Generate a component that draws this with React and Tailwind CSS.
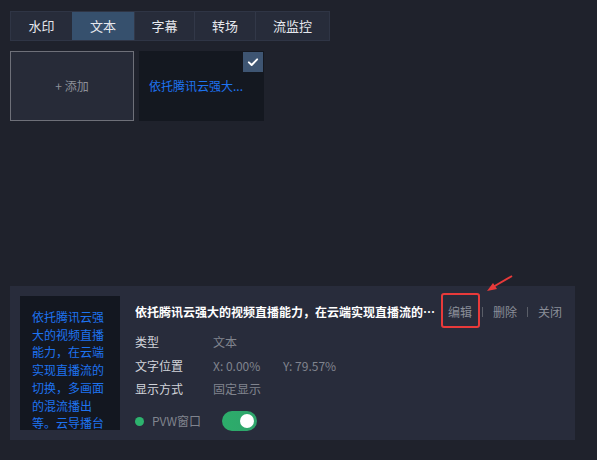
import React from 'react';

const tabs = ['水印', '文本', '字幕', '转场', '流监控'];
const tabWidths = ['w-[61px]', 'w-[62px]', 'w-[60px]', 'w-[61px]', 'w-[74px]'];

const text =
    '依托腾讯云强大的视频直播能力，在云端实现直播流的切换，多画面的混流播出等。云导播台';

export default function App() {
    return (
        <main
            className="relative h-[460px] w-[597px] overflow-hidden bg-[#1f222c] text-[12px]"
            style={{ fontFamily: '"Microsoft YaHei", "Noto Sans CJK SC", "Noto Sans", sans-serif' }}
        >
            {/* ─── Tabs ─── */}
            <div className="ml-[10px] mt-[11px] flex h-[30px] w-fit border border-[#2f3545] bg-[#272c3a]">
                {tabs.map((t, i) => (
                    <div
                        key={t}
                        className={`${tabWidths[i]} flex items-center justify-center text-[13px] text-[#e6e8ee] ${
                            i === 1 ? 'bg-[#36506d]' : ''
                        } ${i > 1 ? 'border-l border-[#323848]' : ''}`}
                    >
                        {t}
                    </div>
                ))}
            </div>

            {/* ─── Cards ─── */}
            <div className="ml-[10px] mt-[10px] flex gap-[5px]">
                <div className="flex h-[70px] w-[124px] items-center justify-center border border-[#6e7079] bg-[#272b38] text-[12px] text-[#8d9099]">
                    + 添加
                </div>
                <div className="relative flex h-[70px] w-[125px] items-center bg-[#141820] pl-[10px] text-[12px] text-[#1e73f0]">
                    依托腾讯云强大...
                    <div className="absolute right-[1px] top-[1px] flex h-[20px] w-[20px] items-center justify-center bg-[#3e5572]">
                        <svg viewBox="0 0 16 16" className="h-[12px] w-[12px]">
                            <path d="M2.5 8.5 L6.2 12 L13.5 4.5" fill="none" stroke="#fff" strokeWidth="2.6" strokeLinecap="round" strokeLinejoin="round" />
                        </svg>
                    </div>
                </div>
            </div>

            {/* ─── Detail panel ─── */}
            <section className="absolute left-[10px] top-[286px] flex h-[154px] w-[565px] gap-[15px] bg-[#282c3b] px-[10px] pt-[10px]">
                <div className="h-[134px] w-[100px] shrink-0 overflow-hidden bg-[#131720] px-[12px] pt-[12px] text-[12px] leading-[17.7px] text-[#1e73f0]">
                    {text}
                </div>
                <div className="flex min-w-0 flex-1 flex-col">
                    <div className="flex h-[32px] items-center">
                        <p className="w-[301px] truncate text-[12px] font-bold text-white">
                            依托腾讯云强大的视频直播能力，在云端实现直播流的切换，多画面的混流播出等。
                        </p>
                        <div className="ml-[12px] flex items-center text-[12px] text-[#8a8e98]">
                            <span className="relative">
                                编辑
                                <span className="absolute -left-[7px] -top-[10px] h-[35px] w-[39px] rounded-[3px] border-2 border-[#e83a3a]" />
                            </span>
                            <span className="mx-[10px] h-[10px] w-px bg-[#5a5e68]" />
                            <span>删除</span>
                            <span className="mx-[10px] h-[10px] w-px bg-[#5a5e68]" />
                            <span>关闭</span>
                        </div>
                    </div>
                    <div className="mt-[2px] flex h-[24px] items-center text-[12px]">
                        <span className="w-[78px] text-[#d2d4da]">类型</span>
                        <span className="text-[#80848e]">文本</span>
                    </div>
                    <div className="flex h-[24px] items-center text-[12px]">
                        <span className="w-[78px] text-[#d2d4da]">文字位置</span>
                        <span className="w-[70px] text-[#80848e]">X: 0.00%</span>
                        <span className="text-[#80848e]">Y: 79.57%</span>
                    </div>
                    <div className="flex h-[22px] items-center text-[12px]">
                        <span className="w-[78px] text-[#d2d4da]">显示方式</span>
                        <span className="text-[#80848e]">固定显示</span>
                    </div>
                    <div className="mt-[11px] flex items-center text-[12px]">
                        <span className="h-[9px] w-[9px] rounded-full bg-[#2db36e]" />
                        <span className="ml-[8px] w-[70px] text-[#80848e]">PVW窗口</span>
                        <span className="relative h-[20px] w-[35px] rounded-full bg-gradient-to-r from-[#2cad6a] to-[#2fa56c]">
                            <span className="absolute right-[3px] top-[3px] h-[14px] w-[14px] rounded-full bg-white" />
                        </span>
                    </div>
                </div>
            </section>

            {/* Annotation arrow */}
            <svg className="pointer-events-none absolute left-0 top-0" width="597" height="460">
                <line x1="512" y1="276" x2="493" y2="287" stroke="#e83a3a" strokeWidth="2" />
                <polygon points="487,291 493,283 497,289" fill="#e83a3a" />
            </svg>
        </main>
    );
}
